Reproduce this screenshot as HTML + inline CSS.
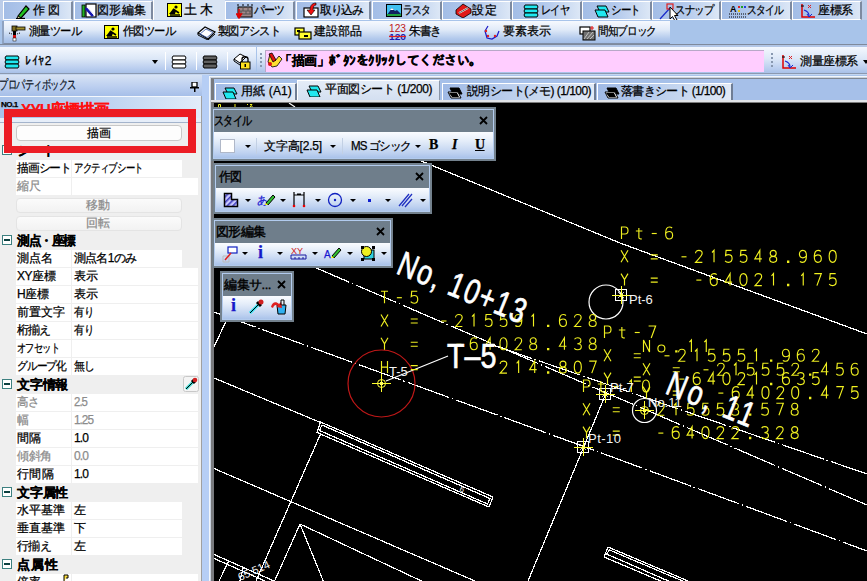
<!DOCTYPE html>
<html><head><meta charset="utf-8">
<style>
*{margin:0;padding:0;box-sizing:border-box}
html,body{width:867px;height:581px;overflow:hidden;background:#a9c4ea;font-family:"Liberation Sans",sans-serif;font-size:12px;color:#000}
.a{position:absolute}
.t{position:absolute;white-space:nowrap;font-size:12px;line-height:14px;letter-spacing:-0.5px;-webkit-text-stroke:0.25px currentColor}
/* row1 tabs */
#row1{left:0;top:0;width:867px;height:21px;background:#bccde9}
.tab{position:absolute;top:1px;height:19px;border-top:1px solid #fff;border-left:1px solid #fff;border-right:2px solid #7d8aa0;border-bottom:1px solid #fff;background:linear-gradient(90deg,#a3bde6 0%,#b4caec 50%,#dce7f6 100%)}
.tab.sel{top:0;height:21px;border:none;background:#d9e4f3;border-left:1px solid #fff}
/* row2 */
#row2{left:0;top:20px;width:867px;height:26px;background:#a8c4ea}
#tb2{left:2px;top:21px;width:668px;height:24px;background:linear-gradient(#f6f9fe 0%,#e0eaf8 40%,#b2c9ec 80%,#a3bde6 100%);border-left:2px solid #8fa2c0;border-bottom:2px solid #7f8da4}
/* row3 */
#tb3{left:0;top:47px;width:256px;height:27px;background:linear-gradient(#f4f8fe 0%,#dce7f7 45%,#b7ccee 85%,#a9c1e8 100%);border-bottom:1px solid #8ea2c2}
#tb3b{left:257px;top:47px;width:510px;height:27px;background:linear-gradient(#f4f8fe 0%,#dce7f7 45%,#b7ccee 85%,#a9c1e8 100%);border-bottom:1px solid #8ea2c2}
#pink{left:265px;top:50px;width:499px;height:22px;background:#ffcdff;border-top:1px solid #b8a8c8;border-left:1px solid #b8a8c8}
#tb3c{left:767px;top:47px;width:100px;height:27px;background:linear-gradient(#f4f8fe 0%,#dce7f7 45%,#b7ccee 85%,#a9c1e8 100%);border-bottom:1px solid #8ea2c2}
/* left panel */
#phead{left:0;top:75px;width:204px;height:21px;background:linear-gradient(#d8e3f4 0%,#bccff0 55%,#a6bfe8 100%)}
#pbody{left:0;top:96px;width:202px;height:485px;background:#efefef;border-right:1px solid #a0a0a0}
#ptitle{left:0;top:96px;width:201px;height:27px;background:linear-gradient(#f4f8fd 0,#f4f8fd 1px,transparent 1px,transparent 22px,#e6eef9 22px,#e6eef9 26px,#a4b4cc 26px),linear-gradient(90deg,#a8c2ea 0%,#b8cfef 45%,#d2e2f6 80%,#e2ecfa 100%)}
#split{left:202px;top:75px;width:7px;height:506px;background:#b6cef5}
.row{position:absolute;left:16px;height:17px;background:#fff}
.cell{position:absolute;top:0;height:17px;background:#fff}
.grp{position:absolute;left:0;height:18px;font-weight:bold}
.box{position:absolute;left:2px;width:10px;height:10px;border:1px solid #3d8080;background:#fff}
.box:after{content:"";position:absolute;left:1px;top:3px;width:6px;height:2px;background:#0c4040}
/* canvas frame */
#frame{left:209px;top:76px;width:658px;height:505px;background:#a6c0e9;border-left:1px solid #fff;border-top:1px solid #fff}
#canvas{left:214px;top:103px;width:653px;height:478px;background:#000;overflow:hidden}
.stab{position:absolute;top:83px;height:17px;border-top:1px solid #fff;border-left:1px solid #fff;border-right:2px solid #6f7d94;background:linear-gradient(90deg,#a0bae6,#c5d6f0 60%,#e2eaf6)}
/* floating toolbars */
.ft{position:absolute;background:#788692;border:1px solid #67747f}
.ft .ti{position:absolute;left:1px;top:2px;right:1px;height:23px;background:#6e7e8b;border:1px solid #9fb7d8;border-bottom:none}
.ft .bd{position:absolute;left:1px;right:1px;bottom:2px;height:25px;background:linear-gradient(#fbfdff 0%,#e2ebf8 40%,#b9cdee 85%,#a9c1e8 100%);border:1px solid #b6cdee;border-top:none}
.ft .tt{position:absolute;left:3px;top:5px;font-size:13px;color:#101820;letter-spacing:-0.5px}
.ft .x{position:absolute;right:6px;top:3px;font-size:16px;color:#000;font-weight:bold}
.dd{position:absolute;width:0;height:0;border-left:3px solid transparent;border-right:3px solid transparent;border-top:3px solid #000}
.sep{position:absolute;width:1px;background:#c0cde0;border-right:1px solid #fff}

.row .vdiv{position:absolute;left:55px;top:0;width:1px;height:17px;background:#efefef}
.gt{font-weight:bold;font-size:13px;letter-spacing:-0.3px}
.lt{font-size:12px;letter-spacing:-0.8px}
.btn{position:absolute;left:16px;width:166px;height:15px;background:linear-gradient(#fbfbfb,#f2f2f2);border:1px solid #e4e4e4;border-radius:4px}
#redbox{left:4px;top:109px;width:192px;height:44px;border:8px solid #ec1c24;border-bottom-width:7px}
</style></head><body>

<!-- ROW 1 -->
<div id="row1" class="a"></div>
<div class="tab" style="left:3px;width:70px"></div>
<div class="tab" style="left:74px;width:79px"></div>
<div class="tab sel" style="left:153px;width:72px"></div>
<div class="tab" style="left:225px;width:70px"></div>
<div class="tab" style="left:296px;width:75px"></div>
<div class="tab" style="left:372px;width:70px"></div>
<div class="tab" style="left:442px;width:70px"></div>
<div class="tab" style="left:512px;width:70px"></div>
<div class="tab" style="left:582px;width:70px"></div>
<div class="tab" style="left:652px;width:69px"></div>
<div class="tab" style="left:721px;width:71px"></div>
<div class="tab" style="left:792px;width:70px"></div>

<!-- ROW 2 -->
<div id="row2" class="a"></div>
<div id="tb2" class="a"></div>

<!-- ROW 3 -->
<div id="tb3" class="a"></div>
<div id="tb3b" class="a"></div>
<div id="pink" class="a"></div>
<div id="tb3c" class="a"></div>

<!-- LEFT PANEL -->
<div id="phead" class="a"></div>
<div id="pbody" class="a"></div>
<div id="ptitle" class="a"></div>
<div id="split" class="a"></div>
<svg class="a" style="left:190px;top:82px" width="10" height="10"><rect x="2" y="0" width="5" height="5" fill="#fff" stroke="#000" stroke-width="1.3"/><rect x="0" y="5" width="9" height="1.5" fill="#000"/><rect x="4" y="6" width="1.5" height="4" fill="#000"/></svg>
<div class="t" style="left:1px;top:100px;font-size:8px;font-weight:bold;line-height:9px;letter-spacing:-0.5px">NO.1</div>
<div class="btn" style="top:125px;height:16px;background:#fdfdfd;border-color:#c8c8c8"></div>
<div class="box" style="top:145px"></div>
<div class="row" style="top:160px;width:166px"><div class="vdiv"></div></div>
<div class="row" style="top:178px;width:182px"><div class="vdiv"></div></div>
<div class="btn" style="top:198px"></div>
<div class="btn" style="top:216px"></div>
<div class="box" style="top:235px"></div>
<div class="row" style="top:250px;width:166px"><div class="vdiv"></div></div>
<div class="row" style="top:268px;width:182px"><div class="vdiv"></div></div>
<div class="row" style="top:286px;width:182px"><div class="vdiv"></div></div>
<div class="row" style="top:304px;width:182px"><div class="vdiv"></div></div>
<div class="row" style="top:322px;width:182px"><div class="vdiv"></div></div>
<div class="row" style="top:340px;width:182px"><div class="vdiv"></div></div>
<div class="row" style="top:358px;width:182px"><div class="vdiv"></div></div>
<div class="box" style="top:379px"></div>
<div class="row" style="top:394px;width:182px"><div class="vdiv"></div></div>
<div class="row" style="top:412px;width:182px"><div class="vdiv"></div></div>
<div class="row" style="top:430px;width:182px"><div class="vdiv"></div></div>
<div class="row" style="top:448px;width:182px"><div class="vdiv"></div></div>
<div class="row" style="top:466px;width:182px"><div class="vdiv"></div></div>
<div class="box" style="top:487px"></div>
<div class="row" style="top:502px;width:166px"><div class="vdiv"></div></div>
<div class="row" style="top:520px;width:166px"><div class="vdiv"></div></div>
<div class="row" style="top:538px;width:166px"><div class="vdiv"></div></div>
<div class="box" style="top:559px"></div>
<div class="row" style="top:574px;width:182px"><div class="vdiv"></div></div>



<!-- CANVAS FRAME -->
<div class="a" style="left:0;top:44px;width:867px;height:1px;background:#7f8a9c"></div>
<div class="a" style="left:0;top:45px;width:867px;height:2px;background:#b2c6e6"></div>
<div class="a" style="left:0;top:73px;width:867px;height:1px;background:#8b99b0"></div>
<div class="a" style="left:0;top:74px;width:867px;height:1px;background:#c4d6f0"></div>
<div class="a" style="left:209px;top:76px;width:658px;height:505px;background:#f2f6fb"></div>
<div class="a" style="left:210px;top:77px;width:657px;height:504px;background:#c9d2de"></div>
<div class="a" style="left:211px;top:78px;width:656px;height:503px;background:#a6c0e9;border-left:3px solid #787a7e;border-top:1px solid #7f8791"></div>
<div id="canvas" class="a"></div>
<div class="stab" style="left:215px;width:82px"></div>
<div class="stab" style="left:442px;width:154px"></div>
<div class="stab" style="left:597px;width:136px"></div>
<div class="a" style="left:297px;top:80px;width:143px;height:22px;background:linear-gradient(#e4ecf7,#d2def0);border-top:1px solid #fff;border-left:1px solid #fff;border-right:1px solid #8a96a8"></div>

<svg class="a" style="left:0;top:0" width="867" height="581" viewBox="0 0 867 581">
<defs><clipPath id="cc"><rect x="214" y="103" width="653" height="478"/></clipPath></defs>
<g clip-path="url(#cc)" fill="none" stroke="#fff" stroke-width="1.2" shape-rendering="crispEdges">
<polyline points="380,144 431,165 620,243 867,334"/>
<line x1="214" y1="224" x2="867" y2="505" stroke-dasharray="44 3 1.5 3"/>
<line x1="490" y1="344" x2="867" y2="474" stroke-dasharray="44 3 1.5 3"/>
<polyline points="214,312 581,445.5 867,551" stroke-dasharray="44 3 1.5 3"/>
<line x1="214" y1="378" x2="320.5" y2="422.5"/>
<polygon points="320.5,422 493,497 489,507 317,432.5"/>
<polygon points="322,425 490,498.5 487.5,504 319.5,430.5"/>
<line x1="321" y1="433" x2="256" y2="581"/>
<line x1="214" y1="347" x2="240" y2="291"/>
<line x1="214" y1="468.5" x2="475" y2="581"/>
<polyline points="274.6,581 300,524 323.3,581"/>
<line x1="300" y1="524" x2="867" y2="790"/>
<line x1="214" y1="554.5" x2="274" y2="581"/><line x1="214" y1="558.5" x2="265" y2="581"/>
<line x1="228.5" y1="561.7" x2="219" y2="581"/><line x1="243.3" y1="567.8" x2="239.8" y2="581"/>
<polyline points="605.5,394.5 583.5,447.5 528,581"/>
<polygon points="608,547 780,620 776,630 604,557"/>
<polygon points="609.5,550 777,621 774,627 606.5,554"/>
<circle cx="606" cy="302" r="17" shape-rendering="auto"/>
<circle cx="644.5" cy="410.5" r="12" shape-rendering="auto"/>
<circle cx="381.5" cy="383.5" r="33.5" stroke="#c01818" shape-rendering="auto"/>
<line x1="386" y1="381" x2="448" y2="356" shape-rendering="auto"/>
</g>
<g clip-path="url(#cc)" stroke-width="1" fill="none">
<rect x="615.5" y="289.5" width="11" height="11" stroke="#fff" stroke-width="1" shape-rendering="crispEdges"/>
<path d="M618,292L624,298M624,292L618,298" stroke="#fff" stroke-width="0.8"/>
<path d="M612,295.5H631M621.5,286V304" stroke="#ffff30" stroke-width="1" shape-rendering="crispEdges"/>
<rect x="620" y="294" width="3" height="3" fill="#ffff60" stroke="none"/>
<rect x="599.5" y="388.5" width="11" height="11" stroke="#fff" stroke-width="1" shape-rendering="crispEdges"/>
<path d="M602,391L608,397M608,391L602,397" stroke="#fff" stroke-width="0.8"/>
<path d="M596,394.5H615M605.5,385V403" stroke="#ffff30" stroke-width="1" shape-rendering="crispEdges"/>
<rect x="604" y="393" width="3" height="3" fill="#ffff60" stroke="none"/>
<rect x="577.5" y="441.5" width="11" height="11" stroke="#fff" stroke-width="1" shape-rendering="crispEdges"/>
<path d="M580,444L586,450M586,444L580,450" stroke="#fff" stroke-width="0.8"/>
<path d="M574,447.5H593M583.5,438V456" stroke="#ffff30" stroke-width="1" shape-rendering="crispEdges"/>
<rect x="582" y="446" width="3" height="3" fill="#ffff60" stroke="none"/>
<circle cx="644.5" cy="410.5" r="4" stroke="#ffff40"/>
<path d="M635,410.5H654M644.5,401V419" stroke="#ffff30" stroke-width="1" shape-rendering="crispEdges"/>
<rect x="643" y="409" width="3" height="3" fill="#ffff60" stroke="none"/>
<circle cx="381.5" cy="383.5" r="4" stroke="#ffff40"/>
<path d="M372,383.5H391M381.5,374V392" stroke="#ffff30" stroke-width="1" shape-rendering="crispEdges"/>
<rect x="380" y="382" width="3" height="3" fill="#ffff60" stroke="none"/>
</g>
<g clip-path="url(#cc)" fill="none" stroke="#f0f020" stroke-width="1.15">
<path transform="translate(381.00,291.2)" d="M0,0L7,0M3.5,0L3.5,12"/><path transform="translate(395.87,291.2)" d="M1,6.5L6,6.5"/><path transform="translate(410.74,291.2)" d="M6.5,0L1,0L0.5,5.3C1.3,4.7 2.3,4.3 3.5,4.3C5.5,4.3 7,5.8 7,8C7,10.4 5.5,12 3.4,12C2,12 0.8,11.5 0,10.5"/><path transform="translate(381.00,314.5)" d="M0,0L7,12M7,0L0,12"/><path transform="translate(410.74,314.5)" d="M0,4.5L7,4.5M0,8.5L7,8.5"/><path transform="translate(440.48,314.5)" d="M1,6.5L6,6.5"/><path transform="translate(455.35,314.5)" d="M0.2,3C0.2,1.2 1.6,0 3.5,0C5.5,0 6.8,1.2 6.8,3C6.8,5.5 4.5,7 0.2,12L7,12"/><path transform="translate(470.22,314.5)" d="M1.8,2.2L3.8,0L3.8,12"/><path transform="translate(485.09,314.5)" d="M6.5,0L1,0L0.5,5.3C1.3,4.7 2.3,4.3 3.5,4.3C5.5,4.3 7,5.8 7,8C7,10.4 5.5,12 3.4,12C2,12 0.8,11.5 0,10.5"/><path transform="translate(499.96,314.5)" d="M6.5,0L1,0L0.5,5.3C1.3,4.7 2.3,4.3 3.5,4.3C5.5,4.3 7,5.8 7,8C7,10.4 5.5,12 3.4,12C2,12 0.8,11.5 0,10.5"/><path transform="translate(514.83,314.5)" d="M0.5,11C1.2,11.7 2.2,12 3.2,12C5.5,12 7,9.5 7,5.5C7,2 5.6,0 3.5,0C1.4,0 0,1.6 0,3.8C0,6 1.4,7.5 3.4,7.5C5,7.5 6.2,6.7 7,5.5"/><path transform="translate(529.70,314.5)" d="M1.8,2.2L3.8,0L3.8,12"/><path transform="translate(544.57,314.5)" d="M3,10.8L4.2,10.8L4.2,12L3,12Z"/><path transform="translate(559.44,314.5)" d="M6.5,1C5.8,0.3 4.8,0 3.8,0C1.5,0 0,2.5 0,6.5C0,10 1.4,12 3.5,12C5.6,12 7,10.4 7,8.2C7,6 5.6,4.5 3.6,4.5C2,4.5 0.8,5.3 0,6.5"/><path transform="translate(574.31,314.5)" d="M0.2,3C0.2,1.2 1.6,0 3.5,0C5.5,0 6.8,1.2 6.8,3C6.8,5.5 4.5,7 0.2,12L7,12"/><path transform="translate(589.18,314.5)" d="M3.5,6C1.6,6 0.5,4.6 0.5,3C0.5,1.2 1.8,0 3.5,0C5.2,0 6.5,1.2 6.5,3C6.5,4.6 5.4,6 3.5,6C1.5,6 0,7.3 0,9C0,10.8 1.5,12 3.5,12C5.5,12 7,10.8 7,9C7,7.3 5.5,6 3.5,6Z"/><path transform="translate(381.00,337.8)" d="M0,0L3.5,6L7,0M3.5,6L3.5,12"/><path transform="translate(410.74,337.8)" d="M0,4.5L7,4.5M0,8.5L7,8.5"/><path transform="translate(455.35,337.8)" d="M1,6.5L6,6.5"/><path transform="translate(470.22,337.8)" d="M6.5,1C5.8,0.3 4.8,0 3.8,0C1.5,0 0,2.5 0,6.5C0,10 1.4,12 3.5,12C5.6,12 7,10.4 7,8.2C7,6 5.6,4.5 3.6,4.5C2,4.5 0.8,5.3 0,6.5"/><path transform="translate(485.09,337.8)" d="M5,12L5,0L0,8.5L7,8.5"/><path transform="translate(499.96,337.8)" d="M3.5,0C0.8,0 0,3 0,6C0,9 0.8,12 3.5,12C6.2,12 7,9 7,6C7,3 6.2,0 3.5,0Z"/><path transform="translate(514.83,337.8)" d="M0.2,3C0.2,1.2 1.6,0 3.5,0C5.5,0 6.8,1.2 6.8,3C6.8,5.5 4.5,7 0.2,12L7,12"/><path transform="translate(529.70,337.8)" d="M3.5,6C1.6,6 0.5,4.6 0.5,3C0.5,1.2 1.8,0 3.5,0C5.2,0 6.5,1.2 6.5,3C6.5,4.6 5.4,6 3.5,6C1.5,6 0,7.3 0,9C0,10.8 1.5,12 3.5,12C5.5,12 7,10.8 7,9C7,7.3 5.5,6 3.5,6Z"/><path transform="translate(544.57,337.8)" d="M3,10.8L4.2,10.8L4.2,12L3,12Z"/><path transform="translate(559.44,337.8)" d="M5,12L5,0L0,8.5L7,8.5"/><path transform="translate(574.31,337.8)" d="M0.2,1.5C0.9,0.4 2,0 3.4,0C5.4,0 6.6,1.3 6.6,3C6.6,4.9 5.3,6 3,6C5.5,6 7,7.2 7,9C7,10.9 5.6,12 3.4,12C2,12 0.8,11.5 0,10.5"/><path transform="translate(589.18,337.8)" d="M3.5,6C1.6,6 0.5,4.6 0.5,3C0.5,1.2 1.8,0 3.5,0C5.2,0 6.5,1.2 6.5,3C6.5,4.6 5.4,6 3.5,6C1.5,6 0,7.3 0,9C0,10.8 1.5,12 3.5,12C5.5,12 7,10.8 7,9C7,7.3 5.5,6 3.5,6Z"/><path transform="translate(381.00,361.1)" d="M0.5,0L0.5,12M6.5,0L6.5,12M0.5,6L6.5,6"/><path transform="translate(410.74,361.1)" d="M0,4.5L7,4.5M0,8.5L7,8.5"/><path transform="translate(499.96,361.1)" d="M0.2,3C0.2,1.2 1.6,0 3.5,0C5.5,0 6.8,1.2 6.8,3C6.8,5.5 4.5,7 0.2,12L7,12"/><path transform="translate(514.83,361.1)" d="M1.8,2.2L3.8,0L3.8,12"/><path transform="translate(529.70,361.1)" d="M5,12L5,0L0,8.5L7,8.5"/><path transform="translate(544.57,361.1)" d="M3,10.8L4.2,10.8L4.2,12L3,12Z"/><path transform="translate(559.44,361.1)" d="M3.5,6C1.6,6 0.5,4.6 0.5,3C0.5,1.2 1.8,0 3.5,0C5.2,0 6.5,1.2 6.5,3C6.5,4.6 5.4,6 3.5,6C1.5,6 0,7.3 0,9C0,10.8 1.5,12 3.5,12C5.5,12 7,10.8 7,9C7,7.3 5.5,6 3.5,6Z"/><path transform="translate(574.31,361.1)" d="M3.5,0C0.8,0 0,3 0,6C0,9 0.8,12 3.5,12C6.2,12 7,9 7,6C7,3 6.2,0 3.5,0Z"/><path transform="translate(589.18,361.1)" d="M0,0L7,0L2.6,12"/>
<path transform="translate(621.00,227.0)" d="M0.5,12L0.5,0L4,0C6,0 7,1.3 7,3.5C7,5.7 6,7 4,7L0.5,7"/><path transform="translate(635.87,227.0)" d="M3,1L3,10.5C3,11.7 3.8,12 6,12M0,4L6.5,4"/><path transform="translate(650.74,227.0)" d="M1,6.5L6,6.5"/><path transform="translate(665.61,227.0)" d="M6.5,1C5.8,0.3 4.8,0 3.8,0C1.5,0 0,2.5 0,6.5C0,10 1.4,12 3.5,12C5.6,12 7,10.4 7,8.2C7,6 5.6,4.5 3.6,4.5C2,4.5 0.8,5.3 0,6.5"/><path transform="translate(621.00,250.3)" d="M0,0L7,12M7,0L0,12"/><path transform="translate(650.74,250.3)" d="M0,4.5L7,4.5M0,8.5L7,8.5"/><path transform="translate(680.48,250.3)" d="M1,6.5L6,6.5"/><path transform="translate(695.35,250.3)" d="M0.2,3C0.2,1.2 1.6,0 3.5,0C5.5,0 6.8,1.2 6.8,3C6.8,5.5 4.5,7 0.2,12L7,12"/><path transform="translate(710.22,250.3)" d="M1.8,2.2L3.8,0L3.8,12"/><path transform="translate(725.09,250.3)" d="M6.5,0L1,0L0.5,5.3C1.3,4.7 2.3,4.3 3.5,4.3C5.5,4.3 7,5.8 7,8C7,10.4 5.5,12 3.4,12C2,12 0.8,11.5 0,10.5"/><path transform="translate(739.96,250.3)" d="M6.5,0L1,0L0.5,5.3C1.3,4.7 2.3,4.3 3.5,4.3C5.5,4.3 7,5.8 7,8C7,10.4 5.5,12 3.4,12C2,12 0.8,11.5 0,10.5"/><path transform="translate(754.83,250.3)" d="M5,12L5,0L0,8.5L7,8.5"/><path transform="translate(769.70,250.3)" d="M3.5,6C1.6,6 0.5,4.6 0.5,3C0.5,1.2 1.8,0 3.5,0C5.2,0 6.5,1.2 6.5,3C6.5,4.6 5.4,6 3.5,6C1.5,6 0,7.3 0,9C0,10.8 1.5,12 3.5,12C5.5,12 7,10.8 7,9C7,7.3 5.5,6 3.5,6Z"/><path transform="translate(784.57,250.3)" d="M3,10.8L4.2,10.8L4.2,12L3,12Z"/><path transform="translate(799.44,250.3)" d="M0.5,11C1.2,11.7 2.2,12 3.2,12C5.5,12 7,9.5 7,5.5C7,2 5.6,0 3.5,0C1.4,0 0,1.6 0,3.8C0,6 1.4,7.5 3.4,7.5C5,7.5 6.2,6.7 7,5.5"/><path transform="translate(814.31,250.3)" d="M6.5,1C5.8,0.3 4.8,0 3.8,0C1.5,0 0,2.5 0,6.5C0,10 1.4,12 3.5,12C5.6,12 7,10.4 7,8.2C7,6 5.6,4.5 3.6,4.5C2,4.5 0.8,5.3 0,6.5"/><path transform="translate(829.18,250.3)" d="M3.5,0C0.8,0 0,3 0,6C0,9 0.8,12 3.5,12C6.2,12 7,9 7,6C7,3 6.2,0 3.5,0Z"/><path transform="translate(621.00,273.6)" d="M0,0L3.5,6L7,0M3.5,6L3.5,12"/><path transform="translate(650.74,273.6)" d="M0,4.5L7,4.5M0,8.5L7,8.5"/><path transform="translate(695.35,273.6)" d="M1,6.5L6,6.5"/><path transform="translate(710.22,273.6)" d="M6.5,1C5.8,0.3 4.8,0 3.8,0C1.5,0 0,2.5 0,6.5C0,10 1.4,12 3.5,12C5.6,12 7,10.4 7,8.2C7,6 5.6,4.5 3.6,4.5C2,4.5 0.8,5.3 0,6.5"/><path transform="translate(725.09,273.6)" d="M5,12L5,0L0,8.5L7,8.5"/><path transform="translate(739.96,273.6)" d="M3.5,0C0.8,0 0,3 0,6C0,9 0.8,12 3.5,12C6.2,12 7,9 7,6C7,3 6.2,0 3.5,0Z"/><path transform="translate(754.83,273.6)" d="M0.2,3C0.2,1.2 1.6,0 3.5,0C5.5,0 6.8,1.2 6.8,3C6.8,5.5 4.5,7 0.2,12L7,12"/><path transform="translate(769.70,273.6)" d="M1.8,2.2L3.8,0L3.8,12"/><path transform="translate(784.57,273.6)" d="M3,10.8L4.2,10.8L4.2,12L3,12Z"/><path transform="translate(799.44,273.6)" d="M1.8,2.2L3.8,0L3.8,12"/><path transform="translate(814.31,273.6)" d="M0,0L7,0L2.6,12"/><path transform="translate(829.18,273.6)" d="M6.5,0L1,0L0.5,5.3C1.3,4.7 2.3,4.3 3.5,4.3C5.5,4.3 7,5.8 7,8C7,10.4 5.5,12 3.4,12C2,12 0.8,11.5 0,10.5"/>
<path transform="translate(604.00,326.0)" d="M0.5,12L0.5,0L4,0C6,0 7,1.3 7,3.5C7,5.7 6,7 4,7L0.5,7"/><path transform="translate(618.87,326.0)" d="M3,1L3,10.5C3,11.7 3.8,12 6,12M0,4L6.5,4"/><path transform="translate(633.74,326.0)" d="M1,6.5L6,6.5"/><path transform="translate(648.61,326.0)" d="M0,0L7,0L2.6,12"/><path transform="translate(604.00,349.3)" d="M0,0L7,12M7,0L0,12"/><path transform="translate(633.74,349.3)" d="M0,4.5L7,4.5M0,8.5L7,8.5"/><path transform="translate(663.48,349.3)" d="M1,6.5L6,6.5"/><path transform="translate(678.35,349.3)" d="M0.2,3C0.2,1.2 1.6,0 3.5,0C5.5,0 6.8,1.2 6.8,3C6.8,5.5 4.5,7 0.2,12L7,12"/><path transform="translate(693.22,349.3)" d="M1.8,2.2L3.8,0L3.8,12"/><path transform="translate(708.09,349.3)" d="M6.5,0L1,0L0.5,5.3C1.3,4.7 2.3,4.3 3.5,4.3C5.5,4.3 7,5.8 7,8C7,10.4 5.5,12 3.4,12C2,12 0.8,11.5 0,10.5"/><path transform="translate(722.96,349.3)" d="M6.5,0L1,0L0.5,5.3C1.3,4.7 2.3,4.3 3.5,4.3C5.5,4.3 7,5.8 7,8C7,10.4 5.5,12 3.4,12C2,12 0.8,11.5 0,10.5"/><path transform="translate(737.83,349.3)" d="M6.5,0L1,0L0.5,5.3C1.3,4.7 2.3,4.3 3.5,4.3C5.5,4.3 7,5.8 7,8C7,10.4 5.5,12 3.4,12C2,12 0.8,11.5 0,10.5"/><path transform="translate(752.70,349.3)" d="M1.8,2.2L3.8,0L3.8,12"/><path transform="translate(767.57,349.3)" d="M3,10.8L4.2,10.8L4.2,12L3,12Z"/><path transform="translate(782.44,349.3)" d="M0.5,11C1.2,11.7 2.2,12 3.2,12C5.5,12 7,9.5 7,5.5C7,2 5.6,0 3.5,0C1.4,0 0,1.6 0,3.8C0,6 1.4,7.5 3.4,7.5C5,7.5 6.2,6.7 7,5.5"/><path transform="translate(797.31,349.3)" d="M6.5,1C5.8,0.3 4.8,0 3.8,0C1.5,0 0,2.5 0,6.5C0,10 1.4,12 3.5,12C5.6,12 7,10.4 7,8.2C7,6 5.6,4.5 3.6,4.5C2,4.5 0.8,5.3 0,6.5"/><path transform="translate(812.18,349.3)" d="M0.2,3C0.2,1.2 1.6,0 3.5,0C5.5,0 6.8,1.2 6.8,3C6.8,5.5 4.5,7 0.2,12L7,12"/><path transform="translate(604.00,372.6)" d="M0,0L3.5,6L7,0M3.5,6L3.5,12"/><path transform="translate(633.74,372.6)" d="M0,4.5L7,4.5M0,8.5L7,8.5"/><path transform="translate(678.35,372.6)" d="M1,6.5L6,6.5"/><path transform="translate(693.22,372.6)" d="M6.5,1C5.8,0.3 4.8,0 3.8,0C1.5,0 0,2.5 0,6.5C0,10 1.4,12 3.5,12C5.6,12 7,10.4 7,8.2C7,6 5.6,4.5 3.6,4.5C2,4.5 0.8,5.3 0,6.5"/><path transform="translate(708.09,372.6)" d="M5,12L5,0L0,8.5L7,8.5"/><path transform="translate(722.96,372.6)" d="M3.5,0C0.8,0 0,3 0,6C0,9 0.8,12 3.5,12C6.2,12 7,9 7,6C7,3 6.2,0 3.5,0Z"/><path transform="translate(737.83,372.6)" d="M0.2,3C0.2,1.2 1.6,0 3.5,0C5.5,0 6.8,1.2 6.8,3C6.8,5.5 4.5,7 0.2,12L7,12"/><path transform="translate(752.70,372.6)" d="M1.8,2.2L3.8,0L3.8,12"/><path transform="translate(767.57,372.6)" d="M3,10.8L4.2,10.8L4.2,12L3,12Z"/><path transform="translate(782.44,372.6)" d="M6.5,1C5.8,0.3 4.8,0 3.8,0C1.5,0 0,2.5 0,6.5C0,10 1.4,12 3.5,12C5.6,12 7,10.4 7,8.2C7,6 5.6,4.5 3.6,4.5C2,4.5 0.8,5.3 0,6.5"/><path transform="translate(797.31,372.6)" d="M0.2,1.5C0.9,0.4 2,0 3.4,0C5.4,0 6.6,1.3 6.6,3C6.6,4.9 5.3,6 3,6C5.5,6 7,7.2 7,9C7,10.9 5.6,12 3.4,12C2,12 0.8,11.5 0,10.5"/><path transform="translate(812.18,372.6)" d="M6.5,0L1,0L0.5,5.3C1.3,4.7 2.3,4.3 3.5,4.3C5.5,4.3 7,5.8 7,8C7,10.4 5.5,12 3.4,12C2,12 0.8,11.5 0,10.5"/>
<path transform="translate(643.00,340.0)" d="M0.5,12L0.5,0L6.5,12L6.5,0"/><path transform="translate(657.87,340.0)" d="M3.5,5C1.3,5 0,6.5 0,8.5C0,10.5 1.3,12 3.5,12C5.7,12 7,10.5 7,8.5C7,6.5 5.7,5 3.5,5Z"/><path transform="translate(672.74,340.0)" d="M3,10.8L4.2,10.8L4.2,12L3,12Z"/><path transform="translate(687.61,340.0)" d="M1.8,2.2L3.8,0L3.8,12"/><path transform="translate(702.48,340.0)" d="M1.8,2.2L3.8,0L3.8,12"/><path transform="translate(643.00,363.3)" d="M0,0L7,12M7,0L0,12"/><path transform="translate(672.74,363.3)" d="M0,4.5L7,4.5M0,8.5L7,8.5"/><path transform="translate(702.48,363.3)" d="M1,6.5L6,6.5"/><path transform="translate(717.35,363.3)" d="M0.2,3C0.2,1.2 1.6,0 3.5,0C5.5,0 6.8,1.2 6.8,3C6.8,5.5 4.5,7 0.2,12L7,12"/><path transform="translate(732.22,363.3)" d="M1.8,2.2L3.8,0L3.8,12"/><path transform="translate(747.09,363.3)" d="M6.5,0L1,0L0.5,5.3C1.3,4.7 2.3,4.3 3.5,4.3C5.5,4.3 7,5.8 7,8C7,10.4 5.5,12 3.4,12C2,12 0.8,11.5 0,10.5"/><path transform="translate(761.96,363.3)" d="M6.5,0L1,0L0.5,5.3C1.3,4.7 2.3,4.3 3.5,4.3C5.5,4.3 7,5.8 7,8C7,10.4 5.5,12 3.4,12C2,12 0.8,11.5 0,10.5"/><path transform="translate(776.83,363.3)" d="M6.5,0L1,0L0.5,5.3C1.3,4.7 2.3,4.3 3.5,4.3C5.5,4.3 7,5.8 7,8C7,10.4 5.5,12 3.4,12C2,12 0.8,11.5 0,10.5"/><path transform="translate(791.70,363.3)" d="M0.2,3C0.2,1.2 1.6,0 3.5,0C5.5,0 6.8,1.2 6.8,3C6.8,5.5 4.5,7 0.2,12L7,12"/><path transform="translate(806.57,363.3)" d="M3,10.8L4.2,10.8L4.2,12L3,12Z"/><path transform="translate(821.44,363.3)" d="M5,12L5,0L0,8.5L7,8.5"/><path transform="translate(836.31,363.3)" d="M6.5,0L1,0L0.5,5.3C1.3,4.7 2.3,4.3 3.5,4.3C5.5,4.3 7,5.8 7,8C7,10.4 5.5,12 3.4,12C2,12 0.8,11.5 0,10.5"/><path transform="translate(851.18,363.3)" d="M6.5,1C5.8,0.3 4.8,0 3.8,0C1.5,0 0,2.5 0,6.5C0,10 1.4,12 3.5,12C5.6,12 7,10.4 7,8.2C7,6 5.6,4.5 3.6,4.5C2,4.5 0.8,5.3 0,6.5"/><path transform="translate(643.00,386.6)" d="M0,0L3.5,6L7,0M3.5,6L3.5,12"/><path transform="translate(672.74,386.6)" d="M0,4.5L7,4.5M0,8.5L7,8.5"/><path transform="translate(717.35,386.6)" d="M1,6.5L6,6.5"/><path transform="translate(732.22,386.6)" d="M6.5,1C5.8,0.3 4.8,0 3.8,0C1.5,0 0,2.5 0,6.5C0,10 1.4,12 3.5,12C5.6,12 7,10.4 7,8.2C7,6 5.6,4.5 3.6,4.5C2,4.5 0.8,5.3 0,6.5"/><path transform="translate(747.09,386.6)" d="M5,12L5,0L0,8.5L7,8.5"/><path transform="translate(761.96,386.6)" d="M3.5,0C0.8,0 0,3 0,6C0,9 0.8,12 3.5,12C6.2,12 7,9 7,6C7,3 6.2,0 3.5,0Z"/><path transform="translate(776.83,386.6)" d="M0.2,3C0.2,1.2 1.6,0 3.5,0C5.5,0 6.8,1.2 6.8,3C6.8,5.5 4.5,7 0.2,12L7,12"/><path transform="translate(791.70,386.6)" d="M3.5,0C0.8,0 0,3 0,6C0,9 0.8,12 3.5,12C6.2,12 7,9 7,6C7,3 6.2,0 3.5,0Z"/><path transform="translate(806.57,386.6)" d="M3,10.8L4.2,10.8L4.2,12L3,12Z"/><path transform="translate(821.44,386.6)" d="M5,12L5,0L0,8.5L7,8.5"/><path transform="translate(836.31,386.6)" d="M0,0L7,0L2.6,12"/><path transform="translate(851.18,386.6)" d="M6.5,0L1,0L0.5,5.3C1.3,4.7 2.3,4.3 3.5,4.3C5.5,4.3 7,5.8 7,8C7,10.4 5.5,12 3.4,12C2,12 0.8,11.5 0,10.5"/>
<path transform="translate(583.00,380.0)" d="M0.5,12L0.5,0L4,0C6,0 7,1.3 7,3.5C7,5.7 6,7 4,7L0.5,7"/><path transform="translate(597.87,380.0)" d="M3,1L3,10.5C3,11.7 3.8,12 6,12M0,4L6.5,4"/><path transform="translate(612.74,380.0)" d="M1,6.5L6,6.5"/><path transform="translate(627.61,380.0)" d="M1.8,2.2L3.8,0L3.8,12"/><path transform="translate(642.48,380.0)" d="M3.5,0C0.8,0 0,3 0,6C0,9 0.8,12 3.5,12C6.2,12 7,9 7,6C7,3 6.2,0 3.5,0Z"/><path transform="translate(583.00,403.3)" d="M0,0L7,12M7,0L0,12"/><path transform="translate(612.74,403.3)" d="M0,4.5L7,4.5M0,8.5L7,8.5"/><path transform="translate(642.48,403.3)" d="M1,6.5L6,6.5"/><path transform="translate(657.35,403.3)" d="M0.2,3C0.2,1.2 1.6,0 3.5,0C5.5,0 6.8,1.2 6.8,3C6.8,5.5 4.5,7 0.2,12L7,12"/><path transform="translate(672.22,403.3)" d="M1.8,2.2L3.8,0L3.8,12"/><path transform="translate(687.09,403.3)" d="M6.5,0L1,0L0.5,5.3C1.3,4.7 2.3,4.3 3.5,4.3C5.5,4.3 7,5.8 7,8C7,10.4 5.5,12 3.4,12C2,12 0.8,11.5 0,10.5"/><path transform="translate(701.96,403.3)" d="M6.5,0L1,0L0.5,5.3C1.3,4.7 2.3,4.3 3.5,4.3C5.5,4.3 7,5.8 7,8C7,10.4 5.5,12 3.4,12C2,12 0.8,11.5 0,10.5"/><path transform="translate(716.83,403.3)" d="M6.5,0L1,0L0.5,5.3C1.3,4.7 2.3,4.3 3.5,4.3C5.5,4.3 7,5.8 7,8C7,10.4 5.5,12 3.4,12C2,12 0.8,11.5 0,10.5"/><path transform="translate(731.70,403.3)" d="M0.2,1.5C0.9,0.4 2,0 3.4,0C5.4,0 6.6,1.3 6.6,3C6.6,4.9 5.3,6 3,6C5.5,6 7,7.2 7,9C7,10.9 5.6,12 3.4,12C2,12 0.8,11.5 0,10.5"/><path transform="translate(746.57,403.3)" d="M3,10.8L4.2,10.8L4.2,12L3,12Z"/><path transform="translate(761.44,403.3)" d="M6.5,0L1,0L0.5,5.3C1.3,4.7 2.3,4.3 3.5,4.3C5.5,4.3 7,5.8 7,8C7,10.4 5.5,12 3.4,12C2,12 0.8,11.5 0,10.5"/><path transform="translate(776.31,403.3)" d="M0,0L7,0L2.6,12"/><path transform="translate(791.18,403.3)" d="M3.5,6C1.6,6 0.5,4.6 0.5,3C0.5,1.2 1.8,0 3.5,0C5.2,0 6.5,1.2 6.5,3C6.5,4.6 5.4,6 3.5,6C1.5,6 0,7.3 0,9C0,10.8 1.5,12 3.5,12C5.5,12 7,10.8 7,9C7,7.3 5.5,6 3.5,6Z"/><path transform="translate(583.00,426.6)" d="M0,0L3.5,6L7,0M3.5,6L3.5,12"/><path transform="translate(612.74,426.6)" d="M0,4.5L7,4.5M0,8.5L7,8.5"/><path transform="translate(657.35,426.6)" d="M1,6.5L6,6.5"/><path transform="translate(672.22,426.6)" d="M6.5,1C5.8,0.3 4.8,0 3.8,0C1.5,0 0,2.5 0,6.5C0,10 1.4,12 3.5,12C5.6,12 7,10.4 7,8.2C7,6 5.6,4.5 3.6,4.5C2,4.5 0.8,5.3 0,6.5"/><path transform="translate(687.09,426.6)" d="M5,12L5,0L0,8.5L7,8.5"/><path transform="translate(701.96,426.6)" d="M3.5,0C0.8,0 0,3 0,6C0,9 0.8,12 3.5,12C6.2,12 7,9 7,6C7,3 6.2,0 3.5,0Z"/><path transform="translate(716.83,426.6)" d="M0.2,3C0.2,1.2 1.6,0 3.5,0C5.5,0 6.8,1.2 6.8,3C6.8,5.5 4.5,7 0.2,12L7,12"/><path transform="translate(731.70,426.6)" d="M0.2,3C0.2,1.2 1.6,0 3.5,0C5.5,0 6.8,1.2 6.8,3C6.8,5.5 4.5,7 0.2,12L7,12"/><path transform="translate(746.57,426.6)" d="M3,10.8L4.2,10.8L4.2,12L3,12Z"/><path transform="translate(761.44,426.6)" d="M0.2,1.5C0.9,0.4 2,0 3.4,0C5.4,0 6.6,1.3 6.6,3C6.6,4.9 5.3,6 3,6C5.5,6 7,7.2 7,9C7,10.9 5.6,12 3.4,12C2,12 0.8,11.5 0,10.5"/><path transform="translate(776.31,426.6)" d="M0.2,3C0.2,1.2 1.6,0 3.5,0C5.5,0 6.8,1.2 6.8,3C6.8,5.5 4.5,7 0.2,12L7,12"/><path transform="translate(791.18,426.6)" d="M3.5,6C1.6,6 0.5,4.6 0.5,3C0.5,1.2 1.8,0 3.5,0C5.2,0 6.5,1.2 6.5,3C6.5,4.6 5.4,6 3.5,6C1.5,6 0,7.3 0,9C0,10.8 1.5,12 3.5,12C5.5,12 7,10.8 7,9C7,7.3 5.5,6 3.5,6Z"/>
</g>
<g clip-path="url(#cc)" fill="#f4f4f4" font-family="Liberation Sans" font-size="13">
<text x="629" y="304">Pt-6</text>
<text x="389" y="376">T-5</text>
<text x="610" y="392">Pt-7</text>
<text x="648" y="407">No.11</text>
<text x="588" y="443" letter-spacing="0.5">Pt-10</text>
<text transform="translate(240,581) rotate(-24)" font-size="11">65.514</text>
</g>
<g clip-path="url(#cc)" fill="#fff" stroke="#fff" stroke-width="0.7" font-family="Liberation Sans">
<text transform="translate(395,273) rotate(22) scale(0.8,1.05)" font-size="33" letter-spacing="2">No, 10+13</text>
<text transform="translate(664,393) rotate(22) scale(0.8,1.05)" font-size="33" letter-spacing="4">No, 11</text>
<text transform="translate(447,368) scale(0.82,1)" font-size="35">T–5</text>
</g>
<g clip-path="url(#cc)" fill="none" stroke="#f0f020" stroke-width="1"><path d="M218.5,107V104.5H220.5V107M235,104V107M247,104L248,105M250,104.5H252L250,107H253"/></g>
<line x1="289" y1="103" x2="295" y2="107" stroke="#fff" stroke-width="1.2"/>
<text transform="translate(459,491) rotate(22)" font-family="Liberation Sans" font-size="8" fill="#fff">6</text>
</svg>
<div class="a" style="left:211px;top:107px;width:285px;height:54px;background:#73818d">
<div class="a" style="left:2px;top:2px;width:281px;height:50px;border:1px solid #b2cbee;background:#6f7e8b"></div>
<div class="a" style="left:3px;top:25px;width:279px;height:26px;background:linear-gradient(#fafcff 0%,#e4edf9 35%,#bfd2f0 80%,#aac3ea 100%)"></div>
<svg class="a" style="left:268px;top:9px" width="10" height="9"><path d="M1 1L8 8M8 1L1 8" stroke="#000" stroke-width="1.8"/></svg>
</div><div class="a" style="left:220px;top:139px;width:15px;height:14px;background:#fff;border:1px solid #b0b8c8"></div><div class="dd" style="left:245px;top:145px;border-left-width:3px;border-right-width:3px;border-top-width:3px"></div><div class="a" style="left:256px;top:138px;width:1px;height:16px;background:#c2d0e4"></div><div class="dd" style="left:330px;top:145px;border-left-width:3px;border-right-width:3px;border-top-width:3px"></div><div class="a" style="left:342px;top:138px;width:1px;height:16px;background:#c2d0e4"></div><div class="dd" style="left:415px;top:145px;border-left-width:3px;border-right-width:3px;border-top-width:3px"></div><div class="t" style="left:429px;top:138px;font-size:14px;font-weight:bold;font-family:'Liberation Serif',serif">B</div><div class="t" style="left:452px;top:138px;font-size:14px;font-weight:bold;font-style:italic;font-family:'Liberation Serif',serif">I</div><div class="t" style="left:475px;top:138px;font-size:14px;font-weight:bold;text-decoration:underline;font-family:'Liberation Serif',serif">U</div>
<div class="a" style="left:213px;top:163px;width:219px;height:51px;background:#73818d">
<div class="a" style="left:2px;top:2px;width:215px;height:47px;border:1px solid #b2cbee;background:#6f7e8b"></div>
<div class="a" style="left:3px;top:25px;width:213px;height:23px;background:linear-gradient(#fafcff 0%,#e4edf9 35%,#bfd2f0 80%,#aac3ea 100%)"></div>
<svg class="a" style="left:202px;top:9px" width="10" height="9"><path d="M1 1L8 8M8 1L1 8" stroke="#000" stroke-width="1.8"/></svg>
</div><svg class="a" style="left:223px;top:192px" width="16" height="16"><defs><pattern id="hp" width="4" height="4" patternUnits="userSpaceOnUse" patternTransform="rotate(45)"><rect width="4" height="4" fill="#c8c8ff"/><rect width="1.6" height="4" fill="#4040c0"/></pattern></defs><path d="M1.5 1.5H8.5V7.5H14.5V14.5H1.5Z" fill="url(#hp)" stroke="#000" stroke-width="1.5"/></svg><div class="dd" style="left:245px;top:199px;border-left-width:3px;border-right-width:3px;border-top-width:3px"></div><div class="t" style="left:257px;top:193px;font-size:11px;color:#1818d0">あ</div><svg class="a" style="left:264px;top:192px" width="12" height="14"><path d="M2 11L9 3L11 5L4 13Z" fill="#30c030" stroke="#000" stroke-width="1"/><path d="M2 11L4 13L1 13Z" fill="#ff0"/></svg><div class="dd" style="left:280px;top:199px;border-left-width:3px;border-right-width:3px;border-top-width:3px"></div><svg class="a" style="left:291px;top:191px" width="16" height="17"><path d="M3 15V4H13V15M3 4V1M13 4V1M6 3H10" stroke="#000" stroke-width="1.2" fill="none"/><circle cx="3" cy="15" r="1.3" fill="#e00"/><circle cx="13" cy="15" r="1.3" fill="#e00"/></svg><div class="dd" style="left:315px;top:199px;border-left-width:3px;border-right-width:3px;border-top-width:3px"></div><svg class="a" style="left:327px;top:192px" width="16" height="16"><circle cx="8" cy="8" r="6.5" stroke="#1020c0" stroke-width="1.3" fill="none"/><circle cx="8" cy="8" r="1.2" fill="#1020c0"/></svg><div class="dd" style="left:350px;top:199px;border-left-width:3px;border-right-width:3px;border-top-width:3px"></div><div class="a" style="left:368px;top:199px;width:3px;height:3px;background:#1020d0"></div><div class="dd" style="left:385px;top:199px;border-left-width:3px;border-right-width:3px;border-top-width:3px"></div><svg class="a" style="left:397px;top:192px" width="16" height="16"><path d="M2 14L12 2M5 14L15 2M8 15L15 7" stroke="#2030c0" stroke-width="1.3"/></svg><div class="dd" style="left:420px;top:199px;border-left-width:3px;border-right-width:3px;border-top-width:3px"></div>
<div class="a" style="left:212px;top:218px;width:181px;height:50px;background:#73818d">
<div class="a" style="left:2px;top:2px;width:177px;height:46px;border:1px solid #b2cbee;background:#6f7e8b"></div>
<div class="a" style="left:3px;top:25px;width:175px;height:22px;background:linear-gradient(#fafcff 0%,#e4edf9 35%,#bfd2f0 80%,#aac3ea 100%)"></div>
<svg class="a" style="left:164px;top:9px" width="10" height="9"><path d="M1 1L8 8M8 1L1 8" stroke="#000" stroke-width="1.8"/></svg>
</div><svg class="a" style="left:222px;top:246px" width="16" height="17"><rect x="6" y="1" width="9" height="6" fill="#fff" stroke="#1020c0" stroke-width="1.2"/><path d="M1 16H7V10H1Z" fill="none" stroke="#bbb"/><path d="M3 14L9 7" stroke="#e02020" stroke-width="1.5"/></svg><div class="dd" style="left:242px;top:252px;border-left-width:3px;border-right-width:3px;border-top-width:3px"></div><div class="t" style="left:258px;top:245px;font-size:18px;font-weight:bold;color:#1818c8;font-family:'Liberation Serif',serif">i</div><div class="dd" style="left:277px;top:252px;border-left-width:3px;border-right-width:3px;border-top-width:3px"></div><svg class="a" style="left:290px;top:245px" width="18" height="17"><text x="1" y="9" font-size="9" fill="#d02020" font-family="Liberation Sans">XY</text><path d="M1 10H16M1 14H16M1 10V14M5 12V14M9 12V14M13 12V14M16 10V14" stroke="#1818a0" stroke-width="1"/></svg><div class="dd" style="left:312px;top:252px;border-left-width:3px;border-right-width:3px;border-top-width:3px"></div><div class="t" style="left:324px;top:248px;font-size:10px;color:#1818d0;letter-spacing:-1px">A</div><svg class="a" style="left:330px;top:245px" width="12" height="14"><path d="M2 11L9 3L11 5L4 13Z" fill="#30c030" stroke="#000" stroke-width="1"/><path d="M2 11L4 13L1 13Z" fill="#ff0"/></svg><div class="dd" style="left:347px;top:252px;border-left-width:3px;border-right-width:3px;border-top-width:3px"></div><svg class="a" style="left:360px;top:245px" width="16" height="17"><rect x="4" y="5" width="10" height="9" fill="#30d0e0" stroke="#000"/><circle cx="6.5" cy="6.5" r="5" fill="#f0f020" stroke="#000"/><rect x="1" y="1" width="3" height="3" fill="#000"/><rect x="12" y="1" width="3" height="3" fill="#000"/><rect x="1" y="13" width="3" height="3" fill="#000"/><rect x="12" y="13" width="3" height="3" fill="#000"/></svg><div class="dd" style="left:381px;top:252px;border-left-width:3px;border-right-width:3px;border-top-width:3px"></div>
<div class="a" style="left:220px;top:271px;width:74px;height:51px;background:#73818d">
<div class="a" style="left:2px;top:2px;width:70px;height:47px;border:1px solid #b2cbee;background:#6f7e8b"></div>
<div class="a" style="left:3px;top:25px;width:68px;height:23px;background:linear-gradient(#fafcff 0%,#e4edf9 35%,#bfd2f0 80%,#aac3ea 100%)"></div>
<svg class="a" style="left:57px;top:9px" width="10" height="9"><path d="M1 1L8 8M8 1L1 8" stroke="#000" stroke-width="1.8"/></svg>
</div><div class="t" style="left:231px;top:298px;font-size:18px;font-weight:bold;color:#1818c8;font-family:'Liberation Serif',serif">i</div><svg class="a" style="left:248px;top:298px" width="17" height="17"><path d="M2 15L10 7" stroke="#30e0f0" stroke-width="3"/><path d="M2 15L10 7" stroke="#000" stroke-width="1"/><path d="M9 4L13 8" stroke="#000" stroke-width="3"/><circle cx="13" cy="4" r="2.5" fill="#d02020"/></svg><svg class="a" style="left:270px;top:298px" width="18" height="17"><path d="M7 7L16 7L15 16L8 16Z" fill="#30b0f0" stroke="#000"/><path d="M1 9C2 4 6 3 9 6L11 4L12 10L6 9L8 8C6 6 4 7 3 10Z" fill="#e02020"/><path d="M11 7V2H14V7" fill="none" stroke="#000"/></svg>
<svg class="a" style="left:15px;top:3px" width="16" height="16" viewBox="0 0 16 16"><path d="M3 13L11 3L14 6L6 15Z" fill="#20c020" stroke="#000" stroke-width="1.2"/><path d="M3 13L6 15L2 16Z" fill="#ffffa0" stroke="#000" stroke-width="0.8"/><path d="M1 15.5H10" stroke="#000" stroke-width="1.4"/></svg>
<svg class="a" style="left:81px;top:3px" width="16" height="15" viewBox="0 0 16 15"><rect x="1" y="2" width="3" height="12" fill="#20b020" stroke="#000" stroke-width="0.8"/><rect x="5" y="1" width="10" height="13" fill="#fff" stroke="#000" stroke-width="1.2"/><path d="M5 5L12 13" stroke="#1818b0" stroke-width="3"/><path d="M6 4L13 12" stroke="#fff" stroke-width="1"/></svg>
<svg class="a" style="left:167px;top:3px" width="15" height="14" viewBox="0 0 15 14"><rect x="0.5" y="0.5" width="14" height="13" fill="#ffff00" stroke="#000"/><path d="M2 11L6 6L9 8L8 11Z" fill="#000"/><circle cx="9" cy="4" r="1.6" fill="#000"/><path d="M6 6L12 10M3 12H13" stroke="#000" stroke-width="1.6"/></svg>
<svg class="a" style="left:236px;top:3px" width="18" height="16" viewBox="0 0 18 16"><path d="M2 1V3M7 1V3M12 1V3M16 1V3" stroke="#000"/><rect x="2" y="4" width="14" height="10" fill="#a08888" stroke="#000"/><path d="M2 8H16M2 11H16M7 4V8M12 4V8M5 8V11M10 8V11M14 8V11" stroke="#555"/><path d="M3 6V13M0.5 11L3 15L5.5 11Z" stroke="#e00000" fill="#e00000" stroke-width="1.4"/></svg>
<svg class="a" style="left:303px;top:2px" width="17" height="16" viewBox="0 0 17 16"><rect x="1" y="6" width="14" height="9" fill="#fff" stroke="#000" stroke-width="1.2"/><path d="M13 1C8 1 7 5 7 8L4 8L8 13L12 8L10 8C10 5 11 3 13 3Z" fill="#f01010" stroke="#000" stroke-width="0.6"/></svg>
<svg class="a" style="left:386px;top:4px" width="16" height="13" viewBox="0 0 16 13"><rect x="0.5" y="0.5" width="15" height="12" fill="#40c0f0" stroke="#000"/><path d="M1 11L6 4L9 7L11 6L15 10V12H1Z" fill="#102060"/><path d="M4 6L6 4L8 6L6 6Z" fill="#fff"/><rect x="1" y="10" width="14" height="2" fill="#20a040"/></svg>
<svg class="a" style="left:455px;top:3px" width="17" height="15" viewBox="0 0 17 15"><path d="M1 7L8 1L16 6L16 10L8 15L1 11Z" fill="#e01818" stroke="#000" stroke-width="0.8"/><path d="M4 10L13 5" stroke="#fff" stroke-width="2"/><path d="M4 10L13 5" stroke="#000" stroke-width="0.6"/></svg>
<svg class="a" style="left:523px;top:2px" width="16" height="16" viewBox="0 0 16 16"><path d="M2 3H14L15 5L14 7H2L1 5Z" fill="#20e8f0" stroke="#000"/><path d="M2 7H14L15 9L14 11H2L1 9Z" fill="#20e8f0" stroke="#000"/><path d="M2 11H14L15 13L14 15H2L1 13Z" fill="#20e8f0" stroke="#000"/></svg>
<svg class="a" style="left:594px;top:3px" width="16" height="15" viewBox="0 0 16 15"><path d="M3 3H12L15 9H6Z" fill="#20e8f0" stroke="#000"/><path d="M1 7H11L14 14H4Z" fill="#20e8f0" stroke="#000"/></svg>
<svg class="a" style="left:659px;top:3px" width="20" height="17" viewBox="0 0 20 17"><path d="M1 16L11 5" stroke="#1828c8" stroke-width="1.2"/><rect x="8" y="1" width="6" height="5" fill="none" stroke="#e02020" stroke-width="1.2"/><path d="M11 4V16L13.5 13.5L16 18L18 17L15.5 12.5H19Z" fill="#fff" stroke="#000" stroke-width="1"/></svg>
<svg class="a" style="left:729px;top:4px" width="17" height="14" viewBox="0 0 17 14"><text x="1" y="8" font-size="9" font-family="Liberation Sans" font-weight="bold" fill="#000">A</text><rect x="9" y="2" width="2" height="2" fill="#e02020"/><rect x="12" y="2" width="2" height="2" fill="#20a020"/><rect x="15" y="2" width="2" height="2" fill="#2040e0"/><rect x="9" y="6" width="2" height="2" fill="#e0c020"/><path d="M0 10H17M0 13H17" stroke="#000" stroke-dasharray="1 1"/></svg>
<svg class="a" style="left:799px;top:3px" width="16" height="15" viewBox="0 0 16 15"><path d="M3 1V14H16" stroke="#e00000" stroke-width="1.5" fill="none"/><path d="M2 3H5" stroke="#000"/><path d="M9 2L12 5M12 2L9 5" stroke="#e02020"/><path d="M5 7C8 8 10 10 10 13" stroke="#1828d0" stroke-width="1.2" fill="none"/><path d="M8 11L10 14L13 11" stroke="#1828d0" fill="none"/></svg>
<svg class="a" style="left:8px;top:24px" width="18" height="18" viewBox="0 0 18 18"><rect x="4" y="2" width="5" height="5" fill="#807020" stroke="#000" stroke-width="0.8"/><rect x="8" y="3" width="9" height="3" fill="#a09030" stroke="#000" stroke-width="0.8"/><rect x="5" y="7" width="3" height="4" fill="#000"/><rect x="5" y="11" width="3" height="3" fill="#d01010"/><rect x="5" y="14" width="3" height="3" fill="#fff" stroke="#000" stroke-width="0.5"/><path d="M1 9L4 10M12 9L9 10" stroke="#000" stroke-dasharray="1 1"/></svg>
<svg class="a" style="left:104px;top:25px" width="16" height="15" viewBox="0 0 16 15"><rect x="0.5" y="0.5" width="14" height="13" fill="#ffff00" stroke="#000"/><path d="M2 11L6 6L9 8L8 11Z" fill="#000"/><circle cx="9" cy="4" r="1.6" fill="#000"/><path d="M6 6L12 10M3 12H13" stroke="#000" stroke-width="1.6"/></svg>
<svg class="a" style="left:197px;top:26px" width="19" height="14" viewBox="0 0 19 14"><path d="M1 7L8 1L18 6L11 13Z" fill="#fff" stroke="#000" stroke-width="1.2"/><path d="M3 8L9 3L16 6.5L10 11.5Z" fill="none" stroke="#3050a0" stroke-width="0.8"/><path d="M1 7L1 9L11 14L18 8" fill="none" stroke="#000"/></svg>
<svg class="a" style="left:294px;top:27px" width="18" height="13" viewBox="0 0 18 13"><rect x="1" y="1" width="9" height="7" fill="#ffff30" stroke="#000" stroke-width="1.2"/><rect x="5" y="5" width="12" height="7" fill="#ffff30" stroke="#000" stroke-width="1.2"/><rect x="3" y="3" width="3" height="2" fill="#000"/><rect x="10" y="8" width="4" height="2" fill="#000"/></svg>
<svg class="a" style="left:389px;top:23px" width="18" height="18" viewBox="0 0 18 18"><text x="0" y="9" font-size="10" font-family="Liberation Sans" fill="#c01818" textLength="17" lengthAdjust="spacingAndGlyphs">123</text><text x="0" y="17" font-size="9" font-family="Liberation Sans" fill="#1818b0" font-weight="bold" textLength="17" lengthAdjust="spacingAndGlyphs">120</text><path d="M0 13.5H17" stroke="#e02020" stroke-width="1.2"/></svg>
<svg class="a" style="left:483px;top:25px" width="18" height="16" viewBox="0 0 18 16"><path d="M5 1L2 6L4 13L9 14L14 11L16 6" fill="none" stroke="#1818c8" stroke-width="1.2"/><circle cx="5" cy="11" r="1.2" fill="#e02020"/><circle cx="12" cy="11" r="1.2" fill="#e02020"/><circle cx="3" cy="6" r="1.2" fill="#e02020"/></svg>
<svg class="a" style="left:579px;top:25px" width="17" height="16" viewBox="0 0 17 16"><rect x="1" y="2" width="10" height="7" fill="#fff" stroke="#000" stroke-width="1.2"/><rect x="4" y="6" width="12" height="9" fill="#707070" stroke="#000" stroke-width="1"/><path d="M5 14L10 7M8 14L14 7M11 14L15 10" stroke="#c0c0c0"/><path d="M13 1V5M11 3H15" stroke="#e02020" stroke-width="1.2"/></svg>
<svg class="a" style="left:4px;top:53px" width="17" height="16" viewBox="0 0 17 16"><path d="M2 3H14L15 5L14 7H2L1 5Z" fill="#20e8f0" stroke="#000"/><path d="M2 7H14L15 9L14 11H2L1 9Z" fill="#20e8f0" stroke="#000"/><path d="M2 11H14L15 13L14 15H2L1 13Z" fill="#20e8f0" stroke="#000"/></svg>
<div class="dd" style="left:152px;top:60px;border-left-width:3px;border-right-width:3px;border-top-width:4px"></div>
<div class="a" style="left:165px;top:52px;width:1px;height:18px;background:#c4d2e6;border-right:1px solid #fff"></div>
<div class="a" style="left:196px;top:52px;width:1px;height:18px;background:#c4d2e6;border-right:1px solid #fff"></div>
<div class="a" style="left:227px;top:52px;width:1px;height:18px;background:#c4d2e6;border-right:1px solid #fff"></div>
<svg class="a" style="left:171px;top:53px" width="17" height="17" viewBox="0 0 17 17"><path d="M2 3H14L15 5L14 7H2L1 5Z" fill="#fff" stroke="#000"/><path d="M2 7H14L15 9L14 11H2L1 9Z" fill="#fff" stroke="#000"/><path d="M2 11H14L15 13L14 15H2L1 13Z" fill="#fff" stroke="#000"/></svg>
<svg class="a" style="left:202px;top:53px" width="17" height="17" viewBox="0 0 17 17"><path d="M2 3H14L15 5L14 7H2L1 5Z" fill="#606060" stroke="#000"/><path d="M2 7H14L15 9L14 11H2L1 9Z" fill="#606060" stroke="#000"/><path d="M2 11H14L15 13L14 15H2L1 13Z" fill="#606060" stroke="#000"/></svg>
<svg class="a" style="left:233px;top:52px" width="18" height="18" viewBox="0 0 18 18"><path d="M1 7L7 2L13 5L7 11Z" fill="#fff" stroke="#000"/><path d="M1 7L1 9L7 13" fill="none" stroke="#000"/><path d="M9 10V7C9 4 15 4 15 7V10" fill="none" stroke="#000" stroke-width="1.3"/><rect x="7.5" y="10" width="9.5" height="7" fill="#ffe020" stroke="#000"/><rect x="11.5" y="12" width="1.5" height="3" fill="#000"/></svg>
<div class="a" style="left:260px;top:53px;width:2px;height:16px;background:repeating-linear-gradient(#8898b0 0 2px,transparent 2px 4px)"></div>
<svg class="a" style="left:267px;top:52px" width="17" height="17" viewBox="0 0 17 17"><path d="M3 2L8 9L12 4L15 7L10 14L5 15L1 10Z" fill="#ffe030" stroke="#000" stroke-width="0.8"/><path d="M2 2L5 1L9 8L6 10Z" fill="#e01010" stroke="#000" stroke-width="0.8"/><circle cx="3" cy="12" r="2" fill="#e01010"/></svg>
<div class="a" style="left:771px;top:53px;width:2px;height:16px;background:repeating-linear-gradient(#8898b0 0 2px,transparent 2px 4px)"></div>
<svg class="a" style="left:780px;top:54px" width="16" height="15" viewBox="0 0 16 15"><path d="M3 1V14H16" stroke="#e00000" stroke-width="1.5" fill="none"/><path d="M2 3H5" stroke="#000"/><path d="M9 2L12 5M12 2L9 5" stroke="#e02020"/><path d="M5 7C8 8 10 10 10 13" stroke="#1828d0" stroke-width="1.2" fill="none"/><path d="M8 11L10 14L13 11" stroke="#1828d0" fill="none"/></svg>
<div class="dd" style="left:863px;top:60px;border-left-width:3px;border-right-width:3px;border-top-width:4px"></div>
<svg class="a" style="left:222px;top:85px" width="17" height="14" viewBox="0 0 17 14"><path d="M3 3H12L15 9H6Z" fill="#20e8f0" stroke="#000"/><path d="M1 7H11L14 14H4Z" fill="#20e8f0" stroke="#000"/></svg>
<svg class="a" style="left:306px;top:83px" width="17" height="14" viewBox="0 0 17 14"><path d="M3 3H12L15 9H6Z" fill="#20e8f0" stroke="#000"/><path d="M1 7H11L14 14H4Z" fill="#20e8f0" stroke="#000"/></svg>
<svg class="a" style="left:447px;top:85px" width="17" height="14" viewBox="0 0 17 14"><path d="M3 3H12L15 9H6Z" fill="#000" stroke="#000"/><path d="M1 7H11L14 13H4Z" fill="#fff" stroke="#000"/><path d="M2 8H10L12 12H5Z" fill="#000"/></svg>
<svg class="a" style="left:604px;top:85px" width="17" height="14" viewBox="0 0 17 14"><path d="M3 3H12L15 9H6Z" fill="#000" stroke="#000"/><path d="M1 7H11L14 13H4Z" fill="#fff" stroke="#000"/><path d="M2 8H10L12 12H5Z" fill="#000"/></svg>
<svg class="a" style="left:183px;top:376px" width="16" height="16" viewBox="0 0 16 16"><rect x="0.5" y="0.5" width="15" height="15" rx="2" fill="#f4f4f4" stroke="#c8c8c8"/><path d="M3 13L10 6" stroke="#40d8d0" stroke-width="3"/><path d="M3 13L10 6" stroke="#000" stroke-width="1"/><path d="M9 4L12 7" stroke="#000" stroke-width="3"/><circle cx="12" cy="4" r="2.3" fill="#d02020"/></svg>
<svg class="a" style="left:63px;top:574px" width="6" height="8" viewBox="0 0 6 8"><path d="M1 8V1H5V4H3" fill="#ffe040" stroke="#000" stroke-width="1"/></svg>
<div class="a" style="left:211px;top:100px;width:656px;height:2px;background:#e2e4e8"></div>
<div class="a" style="left:211px;top:102px;width:656px;height:1px;background:#7c7c7c"></div>
<div class="t" style="left:33px;top:3px;font-size:12px;letter-spacing:-0.11px;color:#000">作 図</div>
<div class="t" style="left:97px;top:3px;font-size:12px;letter-spacing:0.25px;color:#000">図形編集</div>
<div class="t" style="left:184px;top:3px;font-size:13px;letter-spacing:-0.21px;color:#000">土 木</div>
<div class="t" style="left:254px;top:3px;font-size:12px;letter-spacing:-1.00px;color:#000;transform:scaleX(0.909);transform-origin:0 0">パーツ</div>
<div class="t" style="left:320px;top:3px;font-size:12px;letter-spacing:-1.00px;color:#000;transform:scaleX(0.977);transform-origin:0 0">取り込み</div>
<div class="t" style="left:403px;top:3px;font-size:12px;letter-spacing:-1.00px;color:#000;transform:scaleX(0.818);transform-origin:0 0">ラスタ</div>
<div class="t" style="left:472px;top:3px;font-size:12px;letter-spacing:0.50px;color:#000">設定</div>
<div class="t" style="left:541px;top:3px;font-size:12px;letter-spacing:-1.00px;color:#000;transform:scaleX(0.848);transform-origin:0 0">レイヤ</div>
<div class="t" style="left:611px;top:3px;font-size:12px;letter-spacing:-1.00px;color:#000;transform:scaleX(0.879);transform-origin:0 0">シート</div>
<div class="t" style="left:675px;top:3px;font-size:12px;letter-spacing:-1.00px;color:#000;transform:scaleX(0.864);transform-origin:0 0">スナップ</div>
<div class="t" style="left:747px;top:3px;font-size:12px;letter-spacing:-1.00px;color:#000;transform:scaleX(0.818);transform-origin:0 0">スタイル</div>
<div class="t" style="left:818px;top:3px;font-size:12px;letter-spacing:-0.33px;color:#000">座標系</div>
<div class="t" style="left:29px;top:24px;font-size:12px;letter-spacing:-1.00px;color:#000;transform:scaleX(0.945);transform-origin:0 0">測量ツール</div>
<div class="t" style="left:123px;top:24px;font-size:12px;letter-spacing:-1.00px;color:#000;transform:scaleX(0.945);transform-origin:0 0">作図ツール</div>
<div class="t" style="left:218px;top:24px;font-size:12px;letter-spacing:-1.00px;color:#000;transform:scaleX(0.939);transform-origin:0 0">製図アシスト</div>
<div class="t" style="left:314px;top:24px;font-size:12px;letter-spacing:0.00px;color:#000">建設部品</div>
<div class="t" style="left:409px;top:24px;font-size:12px;letter-spacing:-1.00px;color:#000;transform:scaleX(0.970);transform-origin:0 0">朱書き</div>
<div class="t" style="left:503px;top:24px;font-size:12px;letter-spacing:0.00px;color:#000">要素表示</div>
<div class="t" style="left:598px;top:24px;font-size:12px;letter-spacing:-1.00px;color:#000;transform:scaleX(0.879);transform-origin:0 0">間知ブロック</div>
<div class="t" style="left:25px;top:54px;font-size:12px;letter-spacing:0.58px;color:#000">ﾚｲﾔ2</div>
<div class="t" style="left:279px;top:54px;font-size:13px;letter-spacing:-0.50px;color:#000;font-weight:bold">「描画」ﾎﾞﾀﾝをｸﾘｯｸしてください。</div>
<div class="t" style="left:800px;top:54px;font-size:12px;letter-spacing:-0.40px;color:#000">測量座標系</div>
<div class="t" style="left:241px;top:84px;font-size:12px;letter-spacing:0.14px;color:#000">用紙 (A1)</div>
<div class="t" style="left:325px;top:82px;font-size:12px;letter-spacing:-0.45px;color:#000">平面図シート (1/200)</div>
<div class="t" style="left:467px;top:84px;font-size:12px;letter-spacing:-0.55px;color:#000">説明シート(メモ) (1/100)</div>
<div class="t" style="left:621px;top:84px;font-size:12px;letter-spacing:-0.67px;color:#000">落書きシート (1/100)</div>
<div class="t" style="left:-1px;top:78px;font-size:13px;letter-spacing:-1.00px;color:#101828;transform:scaleX(0.713);transform-origin:0 0">プロパティボックス</div>
<div class="t" style="left:21px;top:104px;font-size:17px;letter-spacing:-1.00px;color:#ff1010;font-weight:bold;transform:scaleX(0.907);transform-origin:0 0;clip-path:inset(-10px -5px 1px -5px)">XYH座標描画</div>
<div class="t" style="left:87px;top:126px;font-size:12px;letter-spacing:-0.50px;color:#000">描画</div>
<div class="t" style="left:86px;top:198px;font-size:12px;letter-spacing:-0.50px;color:#8c8c8c">移動</div>
<div class="t" style="left:86px;top:216px;font-size:12px;letter-spacing:-0.50px;color:#8c8c8c">回転</div>
<div class="t" style="left:214px;top:114px;font-size:13px;letter-spacing:-1.00px;color:#000;transform:scaleX(0.771);transform-origin:0 0;-webkit-text-stroke:0.4px #000">スタイル</div>
<div class="t" style="left:219px;top:170px;font-size:13px;letter-spacing:-1.00px;color:#000;transform:scaleX(0.917);transform-origin:0 0;-webkit-text-stroke:0.4px #000">作図</div>
<div class="t" style="left:216px;top:225px;font-size:13px;letter-spacing:-0.75px;color:#000;-webkit-text-stroke:0.4px #000">図形編集</div>
<div class="t" style="left:224px;top:278px;font-size:13px;letter-spacing:-0.47px;color:#000;-webkit-text-stroke:0.4px #000">編集サ...</div>
<div class="t" style="left:264px;top:139px;font-size:12px;letter-spacing:-0.17px;color:#000">文字高[2.5]</div>
<div class="t" style="left:351px;top:139px;font-size:12px;letter-spacing:-1.00px;color:#000;transform:scaleX(0.962);transform-origin:0 0">MS ゴシック</div>
<div class="t" style="left:17px;top:161px;font-size:12px;letter-spacing:-1.00px;color:#000;transform:scaleX(0.982);transform-origin:0 0">描画シート</div>
<div class="t" style="left:74px;top:161px;font-size:12px;letter-spacing:-1.00px;color:#000;transform:scaleX(0.784);transform-origin:0 0">アクティブシート</div>
<div class="t" style="left:17px;top:179px;font-size:12px;letter-spacing:-0.50px;color:#8c8c8c">縮尺</div>
<div class="t" style="left:17px;top:251px;font-size:12px;letter-spacing:0.00px;color:#000">測点名</div>
<div class="t" style="left:74px;top:251px;font-size:12px;letter-spacing:-0.78px;color:#000">測点名1のみ</div>
<div class="t" style="left:17px;top:269px;font-size:12px;letter-spacing:-0.50px;color:#000">XY座標</div>
<div class="t" style="left:74px;top:269px;font-size:12px;letter-spacing:-0.50px;color:#000">表示</div>
<div class="t" style="left:17px;top:287px;font-size:12px;letter-spacing:-0.56px;color:#000">H座標</div>
<div class="t" style="left:74px;top:287px;font-size:12px;letter-spacing:-0.50px;color:#000">表示</div>
<div class="t" style="left:17px;top:305px;font-size:12px;letter-spacing:0.00px;color:#000">前置文字</div>
<div class="t" style="left:74px;top:305px;font-size:12px;letter-spacing:-1.00px;color:#000;transform:scaleX(0.864);transform-origin:0 0">有り</div>
<div class="t" style="left:17px;top:323px;font-size:12px;letter-spacing:-1.00px;color:#000">桁揃え</div>
<div class="t" style="left:74px;top:323px;font-size:12px;letter-spacing:-1.00px;color:#000;transform:scaleX(0.864);transform-origin:0 0">有り</div>
<div class="t" style="left:17px;top:341px;font-size:12px;letter-spacing:-1.00px;color:#000;transform:scaleX(0.764);transform-origin:0 0">オフセット</div>
<div class="t" style="left:17px;top:359px;font-size:12px;letter-spacing:-1.00px;color:#000;transform:scaleX(0.891);transform-origin:0 0">グループ化</div>
<div class="t" style="left:74px;top:359px;font-size:12px;letter-spacing:-1.00px;color:#000;transform:scaleX(0.909);transform-origin:0 0">無し</div>
<div class="t" style="left:17px;top:395px;font-size:12px;letter-spacing:-1.00px;color:#8c8c8c;transform:scaleX(0.955);transform-origin:0 0">高さ</div>
<div class="t" style="left:74px;top:395px;font-size:12px;letter-spacing:-1.00px;color:#8c8c8c;transform:scaleX(0.950);transform-origin:0 0">2.5</div>
<div class="t" style="left:17px;top:413px;font-size:12px;letter-spacing:0.00px;color:#8c8c8c">幅</div>
<div class="t" style="left:74px;top:413px;font-size:12px;letter-spacing:-1.00px;color:#8c8c8c;transform:scaleX(0.981);transform-origin:0 0">1.25</div>
<div class="t" style="left:17px;top:431px;font-size:12px;letter-spacing:0.00px;color:#000">間隔</div>
<div class="t" style="left:74px;top:431px;font-size:12px;letter-spacing:-0.90px;color:#000">1.0</div>
<div class="t" style="left:17px;top:449px;font-size:12px;letter-spacing:-0.33px;color:#8c8c8c">傾斜角</div>
<div class="t" style="left:74px;top:449px;font-size:12px;letter-spacing:-0.90px;color:#8c8c8c">0.0</div>
<div class="t" style="left:17px;top:467px;font-size:12px;letter-spacing:0.33px;color:#000">行間隔</div>
<div class="t" style="left:74px;top:467px;font-size:12px;letter-spacing:-0.90px;color:#000">1.0</div>
<div class="t" style="left:17px;top:503px;font-size:12px;letter-spacing:0.00px;color:#000">水平基準</div>
<div class="t" style="left:74px;top:503px;font-size:12px;letter-spacing:-1.00px;color:#000">左</div>
<div class="t" style="left:17px;top:521px;font-size:12px;letter-spacing:0.00px;color:#000">垂直基準</div>
<div class="t" style="left:74px;top:521px;font-size:12px;letter-spacing:-1.00px;color:#000">下</div>
<div class="t" style="left:17px;top:539px;font-size:12px;letter-spacing:-0.67px;color:#000">行揃え</div>
<div class="t" style="left:74px;top:539px;font-size:12px;letter-spacing:-1.00px;color:#000">左</div>
<div class="t" style="left:17px;top:575px;font-size:12px;letter-spacing:-0.50px;color:#000">倍率</div>
<div class="t" style="left:17px;top:144px;font-size:13px;letter-spacing:0.00px;color:#000;font-weight:bold">シート</div>
<div class="t" style="left:17px;top:234px;font-size:13px;letter-spacing:-1.00px;color:#000;font-weight:bold;transform:scaleX(0.967);transform-origin:0 0">測点・座標</div>
<div class="t" style="left:17px;top:378px;font-size:13px;letter-spacing:-0.25px;color:#000;font-weight:bold">文字情報</div>
<div class="t" style="left:17px;top:486px;font-size:13px;letter-spacing:-0.25px;color:#000;font-weight:bold">文字属性</div>
<div class="t" style="left:17px;top:558px;font-size:13px;letter-spacing:1.00px;color:#000;font-weight:bold">点属性</div>
<div id="redbox" class="a"></div>

</body></html>
